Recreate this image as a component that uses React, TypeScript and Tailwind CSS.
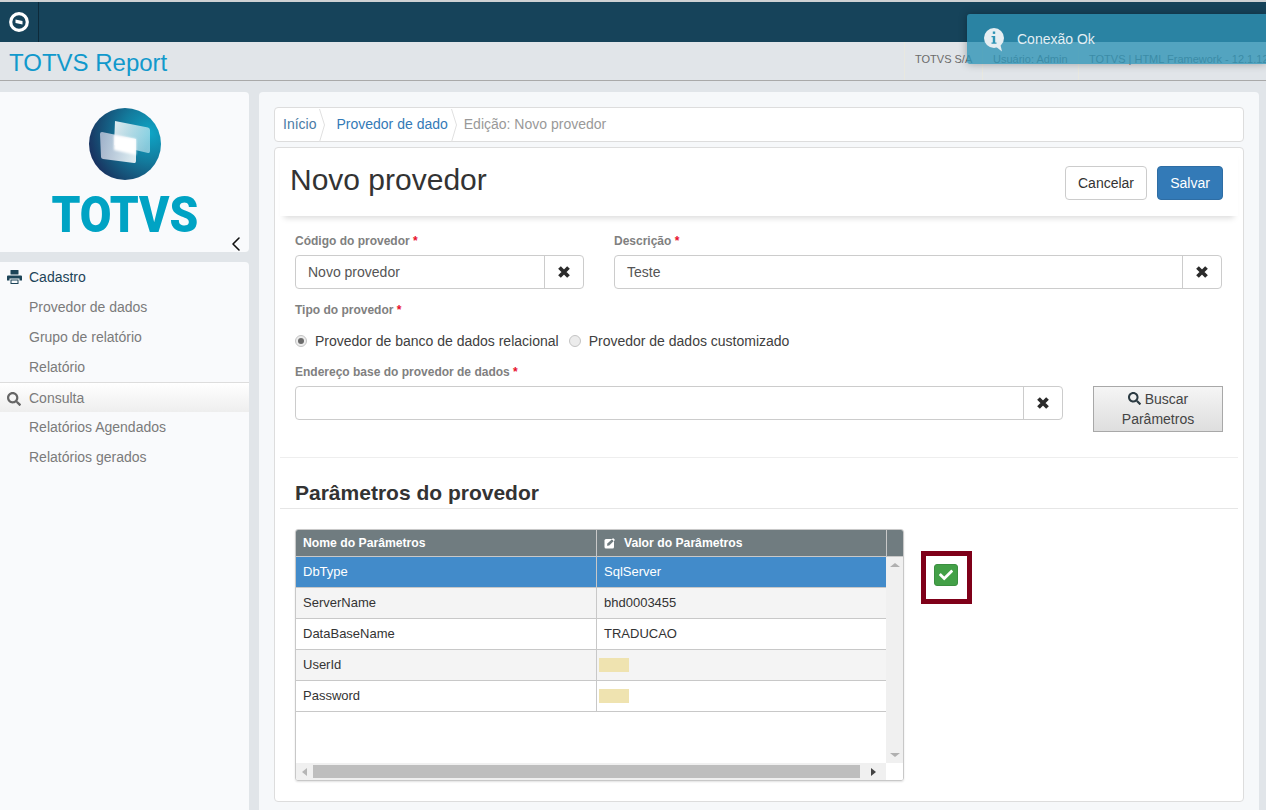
import React from 'react';
import { ChevronLeft } from 'lucide-react';
import { FaCheck, FaSearch } from 'react-icons/fa';

const SphereLogo: React.FC = () => (
    <svg width="74" height="74" viewBox="0 0 74 74">
        <defs>
            <radialGradient id="sphere" cx="0.85" cy="0.35" r="1">
                <stop offset="0" stopColor="#0ea5c6" />
                <stop offset="0.4" stopColor="#137a9c" />
                <stop offset="0.75" stopColor="#17476f" />
                <stop offset="1" stopColor="#1b1d52" />
            </radialGradient>
            <linearGradient id="backCard" x1="0" y1="0.2" x2="1" y2="0.6">
                <stop offset="0" stopColor="#ffffff" stopOpacity="0.85" />
                <stop offset="1" stopColor="#d4eef5" stopOpacity="0.6" />
            </linearGradient>
            <linearGradient id="frontCard" x1="0" y1="0.3" x2="1" y2="0.6">
                <stop offset="0" stopColor="#cfd3e6" stopOpacity="0.75" />
                <stop offset="1" stopColor="#ffffff" stopOpacity="0.85" />
            </linearGradient>
            <filter id="soft" x="-30%" y="-30%" width="160%" height="160%">
                <feGaussianBlur stdDeviation="1.200" />
            </filter>
        </defs>
        <circle cx="37" cy="36" r="36" fill="url(#sphere)" />
        <path d="M27 13 L60 19.500 Q62 20 62 22 L62 43 Q62 45.500 60 45 L26 37 Z" fill="url(#backCard)" />
        <path d="M14 24 L48 31 L48 53 Q48 55.500 46 55 L15 51 Q13 50.500 13 49 L12 26 Q12 24 14 24 Z" fill="url(#frontCard)" />
        <path d="M26 27 L48 31 L48 47 L26 42 Z" fill="#ffffff" filter="url(#soft)" />
    </svg>
);

const PrintIcon: React.FC = () => (
    <svg width="15" height="14" viewBox="0 0 15 14" className="mr-[7px]">
        <rect x="3.500" y="0" width="8" height="4.500" rx="0.500" fill="#1d4458" />
        <path d="M1 5.500 H14 Q15 5.500 15 6.500 V10.500 H12.500 V8.500 H2.500 V10.500 H0 V6.500 Q0 5.500 1 5.500 Z" fill="#1d4458" />
        <path d="M3.500 9.500 H11.500 V14 H3.500 Z M4.500 10.500 V13 H10.500 V10.500 Z" fill="#1d4458" fillRule="evenodd" />
    </svg>
);

const ClearIcon: React.FC = () => (
    <svg width="14" height="14" viewBox="0 0 14 14">
        <path d="M2.500 2.500 L11.500 11.500 M11.500 2.500 L2.500 11.500" stroke="#2b2b2b" strokeWidth="3.800" fill="none" />
    </svg>
);

const EditIcon: React.FC = () => (
    <svg width="12" height="12" viewBox="0 0 12 12" className="mr-[8px]">
        <rect x="0.500" y="2" width="9.500" height="9.500" rx="1.500" fill="#ffffff" />
        <path d="M3 8.700 L3.400 6.500 L8 2.200 L9.800 4 L5.200 8.500 Z" fill="#707c80" />
        <path d="M9 1 L11 3 L9.800 4 L8 2.200 Z" fill="#ffffff" />
    </svg>
);

const Crumb: React.FC = () => (
    <span className="ml-[3px] w-[6px] h-[12px]">
        <svg width="6" height="33" viewBox="0 0 6 33" className="-mt-[10px]">
            <path d="M0.500 0 L5.500 16 L0.500 33" fill="none" stroke="#e0e0e0" />
        </svg>
    </span>
);

const SideItem: React.FC<{ label: string }> = ({ label }) => (
    <div className="h-[30px] pl-[29px] flex items-center text-[14px] text-[#7b7b7b]">{label}</div>
);

const FieldLabel: React.FC<{ label: string }> = ({ label }) => (
    <div className="h-[17px] text-[12px] leading-[17px] font-bold text-[#808080]">
        {label} <span className="text-[#e8112d]">*</span>
    </div>
);

const ClearInput: React.FC<{ value?: string; className: string }> = ({ value, className }) => (
    <div className={`h-[34px] flex border border-[#cccccc] rounded-[4px] bg-white ${className}`}>
        <div className="flex-1 pl-3 flex items-center text-[14px] text-[#555555]">{value}</div>
        <div className="w-[39px] border-l border-[#cccccc] flex items-center justify-center">
            <ClearIcon />
        </div>
    </div>
);

const Radio: React.FC<{ checked?: boolean; label: string }> = ({ checked, label }) => (
    <div className="flex items-center">
        <span className="w-[12px] h-[12px] rounded-full border border-[#c4c4c4] bg-[#ececec] flex items-center justify-center mr-[8px]">
            {checked && <span className="w-[6px] h-[6px] rounded-full bg-[#6b6b6b]" />}
        </span>
        <span className="text-[14px] text-[#404040]">{label}</span>
    </div>
);

const rows = [
    { name: 'ServerName', value: 'bhd0003455', odd: true },
    { name: 'DataBaseName', value: 'TRADUCAO', odd: false },
    { name: 'UserId', value: '', odd: true },
    { name: 'Password', value: '', odd: false },
];

const App: React.FC = () => {
    return (
        <div className="relative w-[1266px] h-[810px] overflow-hidden bg-[#e1e5e9] font-['Liberation_Sans',Arial,sans-serif]">
            {/* top bars */}
            <div className="h-[2px] bg-[#cfd2d4]" />
            <div className="h-[40px] bg-[#16435a] flex">
                <div className="w-[39px] border-r border-[#0d2a3a] flex items-center justify-center">
                    <svg width="20" height="20" viewBox="0 0 20 20">
                        <circle cx="10" cy="10" r="8.300" fill="none" stroke="#ffffff" strokeWidth="3.200" />
                        <path d="M6.500 7.500 L13.500 9 L13.500 12.500 L6.500 11 Z" fill="#ffffff" />
                    </svg>
                </div>
            </div>
            <div className="h-[39px] border-b border-[#a9a9a9] flex items-stretch">
                <div className="pl-[9px] text-[24px] leading-[42px] text-[#1199cc]">TOTVS Report</div>
                <div className="ml-auto flex text-[11px] leading-[35px] text-[#6b6b6b] w-[362px] shrink-0 whitespace-nowrap overflow-hidden">
                    <div className="w-[78px] shrink-0 pl-[10px] border-l border-[#e8e8e0]">TOTVS S/A</div>
                    <div className="w-[96px] shrink-0 pl-[10px] border-l border-[#e8e8e0]">Usuário: Admin</div>
                    <div className="shrink-0 pl-[10px] border-l border-[#e8e8e0]">TOTVS | HTML Framework - 12.1.12</div>
                </div>
            </div>

            <div className="flex pt-[11px]">
                {/* sidebar */}
                <aside className="w-[249px] shrink-0">
                    <div className="relative h-[160px] bg-[#f9fafc] rounded-r-[4px] flex flex-col items-center pt-[16px]">
                        <SphereLogo />
                        <div className="mt-[8px] text-[50px] leading-[50px] font-black font-['Roboto',sans-serif] scale-x-[0.92] text-[#00a3c4]">TOTVS</div>
                        <ChevronLeft size={24} strokeWidth={1.600} className="absolute right-px -bottom-1 text-[#111111]" />
                    </div>
                    <div className="mt-[10px] h-[548px] bg-[#f9fafc] rounded-tr-[4px]">
                        <div className="h-[30px] pl-[7px] flex items-center text-[14px] text-[#1d4458]">
                            <PrintIcon />
                            Cadastro
                        </div>
                        <SideItem label="Provedor de dados" />
                        <SideItem label="Grupo de relatório" />
                        <SideItem label="Relatório" />
                        <div className="h-[30px] pl-[7px] pt-[2px] flex items-center text-[14px] text-[#7b7b7b] border-t border-[#dddddd] bg-gradient-to-b from-white to-[#eeeeee]">
                            <FaSearch size={14} className="mr-[8px] text-[#666666]" />
                            Consulta
                        </div>
                        <SideItem label="Relatórios Agendados" />
                        <SideItem label="Relatórios gerados" />
                    </div>
                </aside>

                {/* main */}
                <main className="ml-[10px] w-[1000px] h-[718px] bg-[#f6f8fa] rounded-t-[4px] px-[15px] pt-[15px]">
                    <div className="h-[35px] bg-white border border-[#dddddd] rounded-[4px] flex items-center pl-[8px] text-[14px]">
                        <span className="text-[#4a7ba6]">Início</span>
                        <Crumb />
                        <span className="ml-[11px] text-[#337ab7]">Provedor de dado</span>
                        <Crumb />
                        <span className="ml-[7px] text-[#999999]">Edição: Novo provedor</span>
                    </div>

                    <div className="mt-[5px] h-[655px] bg-white border border-[#dddddd] rounded-[4px]">
                        <div className="h-[68px] mx-[5px] pl-[10px] pr-[15px] flex items-start justify-between shadow-[0_6px_6px_-4px_rgba(0,0,0,0.15)]">
                            <h1 className="mt-[14px] text-[30px] leading-[36px] text-[#333333]">Novo provedor</h1>
                            <div className="mt-[18px] flex gap-[10px] text-[14px]">
                                <button className="w-[82px] h-[34px] border border-[#cccccc] rounded-[4px] bg-white text-[#333333]">Cancelar</button>
                                <button className="w-[66px] h-[34px] border border-[#2e6da4] rounded-[4px] bg-[#337ab7] text-white">Salvar</button>
                            </div>
                        </div>

                        <div className="px-[20px] pt-[17px]">
                            <div className="flex gap-[30px]">
                                <div className="w-[289px]">
                                    <FieldLabel label="Código do provedor" />
                                    <ClearInput value="Novo provedor" className="mt-[5px] w-[289px]" />
                                </div>
                                <div className="w-[608px]">
                                    <FieldLabel label="Descrição" />
                                    <ClearInput value="Teste" className="mt-[5px] w-[608px]" />
                                </div>
                            </div>
                            <div className="mt-[13px]"><FieldLabel label="Tipo do provedor" /></div>
                            <div className="mt-[12px] h-[20px] flex items-center gap-[10px]">
                                <Radio checked label="Provedor de banco de dados relacional" />
                                <Radio label="Provedor de dados customizado" />
                            </div>
                            <div className="mt-[13px]"><FieldLabel label="Endereço base do provedor de dados" /></div>
                            <div className="mt-[5px] flex items-start gap-[30px]">
                                <ClearInput className="w-[768px]" />
                                <button className="w-[130px] h-[46px] border border-[#a8a8a8] bg-gradient-to-b from-[#f5f5f5] to-[#dedede] text-[14px] leading-[20px] text-[#444444]">
                                    <FaSearch size={13} className="inline mr-[4px] -mt-[3px] text-[#2b3a42]" />
                                    Buscar
                                    <br />
                                    Parâmetros
                                </button>
                            </div>
                        </div>

                        <div className="mt-[25px] mx-[5px] h-px bg-[#eeeeee]" />
                        <div className="mx-[5px] h-[51px] border-b border-[#e6e6e6] pl-[15px] pt-[23px] text-[21px] leading-[23px] font-bold text-[#333333]">
                            Parâmetros do provedor
                        </div>

                        {/* grid */}
                        <div className="mt-[20px] ml-[20px] flex items-start">
                            <div className="w-[609px] h-[252px] border border-[#c8c8c8] rounded-[3px] shadow-[0_1px_2px_rgba(0,0,0,0.12)] overflow-hidden flex flex-col text-[13px]">
                                <div className="h-[27px] shrink-0 bg-[#707c80] border-b border-[#c8c8c8] flex font-bold text-[12.2px] text-white leading-[26px]">
                                    <div className="w-[301px] pl-[7px] border-r border-[#c8c8c8]">Nome do Parâmetros</div>
                                    <div className="w-[290px] pl-[7px] border-r border-[#c8c8c8] flex items-center">
                                        <EditIcon />
                                        Valor do Parâmetros
                                    </div>
                                </div>
                                <div className="flex flex-1 min-h-0">
                                    <div className="w-[590px] flex flex-col">
                                        <div className="h-[31px] bg-[#428bca] border-b border-[#c8c8c8] flex text-white leading-[30px]">
                                            <div className="w-[301px] pl-[7px] border-r border-[#c8c8c8]">DbType</div>
                                            <div className="pl-[7px]">SqlServer</div>
                                        </div>
                                        {rows.map((r) => (
                                            <div
                                                key={r.name}
                                                className={`h-[31px] border-b border-[#c8c8c8] flex text-[#333333] leading-[30px] ${r.odd ? 'bg-[#f4f4f4]' : 'bg-white'}`}
                                            >
                                                <div className="w-[301px] pl-[7px] border-r border-[#c8c8c8]">{r.name}</div>
                                                <div className="pl-[7px] flex items-center">
                                                    {r.value || <span className="-ml-[5px] -mt-px w-[30px] h-[14px] bg-[#efe3b0]" />}
                                                </div>
                                            </div>
                                        ))}
                                        <div className="mt-auto h-[17px] bg-[#f0f0f0] flex items-center">
                                            <div className="w-[17px] flex justify-center"><span className="border-y-[4px] border-r-[5px] border-y-transparent border-r-[#b5b5b5]" /></div>
                                            <div className="w-[547px] h-[13px] bg-[#bebebe]" />
                                            <div className="flex-1 flex justify-center"><span className="border-y-[4px] border-l-[5px] border-y-transparent border-l-[#444444]" /></div>
                                        </div>
                                    </div>
                                    <div className="w-[17px] flex flex-col">
                                        <div className="flex-1 bg-[#f0f0f0] flex flex-col items-center justify-between py-[6px]">
                                            <span className="border-x-[5px] border-b-[4px] border-x-transparent border-b-[#b0b0b0]" />
                                            <span className="border-x-[5px] border-t-[4px] border-x-transparent border-t-[#b0b0b0]" />
                                        </div>
                                        <div className="h-[17px] bg-white" />
                                    </div>
                                </div>
                            </div>

                            <div className="ml-[17px] mt-[22px] w-[51px] h-[53px] border-[5px] border-[#7f0019] flex items-start pt-[8px] pl-[8px]">
                                <div className="w-[24px] h-[22px] rounded-[3px] bg-[#43a047] border border-[#3b8f40] flex items-center justify-center text-white">
                                    <FaCheck size={14} />
                                </div>
                            </div>
                        </div>
                    </div>
                </main>
            </div>

            {/* toast */}
            <div className="absolute left-[967px] top-[14px] w-[299px] h-[50px] rounded-l-[3px] bg-[#2f94b5]/80 shadow-[0_0_8px_rgba(0,0,0,0.3)] flex items-center pl-[17px]">
                <svg width="20" height="24" viewBox="0 0 20 24" className="mt-[2px]">
                    <circle cx="10" cy="10" r="10" fill="#e6eef2" />
                    <path d="M11 18 L18 23.500 L16 15 Z" fill="#e6eef2" />
                    <rect x="8.800" y="3.500" width="2.400" height="2.400" fill="#2f94b5" />
                    <path d="M7.500 8 H11.200 V14.500 H12.500 V15.800 H7.500 V14.500 H8.800 V9.300 H7.500 Z" fill="#2f94b5" />
                </svg>
                <span className="ml-[13px] text-[14px] text-[#e3eef3]">Conexão Ok</span>
            </div>
        </div>
    );
};

export default App;
